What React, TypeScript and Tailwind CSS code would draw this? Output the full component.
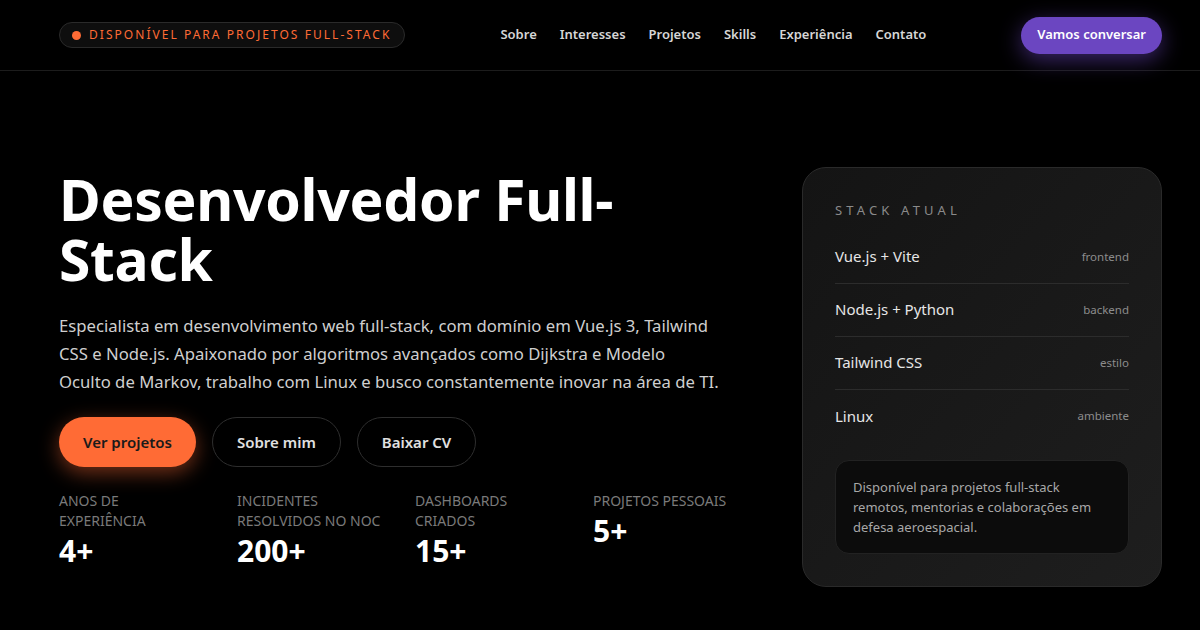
import React from "react";

const links = ["Sobre", "Interesses", "Projetos", "Skills", "Experiência", "Contato"];

const stack = [
  { name: "Vue.js + Vite", tag: "frontend" },
  { name: "Node.js + Python", tag: "backend" },
  { name: "Tailwind CSS", tag: "estilo" },
  { name: "Linux", tag: "ambiente" },
];

const stats = [
  { label: "Anos de experiência", value: "4+" },
  { label: "Incidentes resolvidos no NOC", value: "200+" },
  { label: "Dashboards criados", value: "15+" },
  { label: "Projetos pessoais", value: "5+" },
];

const App: React.FC = () => {
  return (
    <div
      className="min-h-[630px] bg-black text-white"
      style={{ fontFamily: '"Noto Sans", "Open Sans", sans-serif' }}
    >
      <header className="h-[71px] border-b border-[#1c1c1c]">
        <div className="flex h-full items-center pl-[59px] pr-[38px]">
          <div className="flex h-[26px] items-center gap-[8px] rounded-full border border-[#2a2a2a] bg-[#0e0e0e] pl-[12px] pr-[13px]">
            <span className="h-[9px] w-[9px] rounded-full bg-[#ff6b35]" />
            <span className="text-[12px] tracking-[0.17em] text-[#ff6b35]">
              DISPONÍVEL PARA PROJETOS FULL-STACK
            </span>
          </div>
          <nav className="ml-auto flex items-center gap-[23px] text-[13px] font-semibold text-[#d6d6d6]">
            {links.map((l) => (
              <a key={l} href="#" className="hover:text-white">
                {l}
              </a>
            ))}
          </nav>
          <button className="ml-[95px] h-[37px] rounded-full bg-[#6b46c1] px-[16px] text-[13px] font-semibold text-white shadow-[0_6px_22px_rgba(107,70,193,0.55)]">
            Vamos conversar
          </button>
        </div>
      </header>

      <main className="flex items-center justify-between pl-[59px] pr-[38px] pt-[96px]">
        <section className="w-[690px] pb-[14px]">
          <h1 className="w-[620px] text-[57px] font-bold leading-[60px] tracking-[-0.005em]">
            Desenvolvedor Full-Stack
          </h1>
          <p className="mt-[23px] text-[16.7px] leading-[28px] text-[#cfcfcf]">
            Especialista em desenvolvimento web full-stack, com domínio em Vue.js 3, Tailwind
            <br />
            CSS e Node.js. Apaixonado por algoritmos avançados como Dijkstra e Modelo
            <br />
            Oculto de Markov, trabalho com Linux e busco constantemente inovar na área de TI.
          </p>
          <div className="mt-[21px] flex gap-[16px]">
            <button className="h-[50px] rounded-full bg-[#ff6b35] px-[24px] text-[15px] font-semibold text-[#1a1a1a] shadow-[0_6px_20px_rgba(255,107,53,0.45)]">
              Ver projetos
            </button>
            <button className="h-[50px] rounded-full border border-[#2e2e2e] px-[24px] text-[15px] font-semibold text-[#e0e0e0]">
              Sobre mim
            </button>
            <button className="h-[50px] rounded-full border border-[#2e2e2e] px-[24px] text-[15px] font-semibold text-[#e0e0e0]">
              Baixar CV
            </button>
          </div>
          <div className="mt-[24px] grid w-[712px] grid-cols-4">
            {stats.map((s) => (
              <div key={s.label}>
                <div className="max-w-[147px] text-[14px] uppercase leading-[20px] text-[#7a7a7a]">
                  {s.label}
                </div>
                <div className="mt-[1px] text-[30px] font-bold leading-[38px]">{s.value}</div>
              </div>
            ))}
          </div>
        </section>

        <aside className="w-[360px] shrink-0 rounded-[24px] border border-[#2a2a2a] bg-gradient-to-br from-[#141414] to-[#1e1e1e] px-[32px] pb-[32px] pt-[33px]">
          <div className="text-[13px] tracking-[0.32em] text-[#8a8a8a]">STACK ATUAL</div>
          <ul className="mt-[10px]">
            {stack.map((s, i) => (
              <li
                key={s.name}
                className={`flex h-[53px] items-center justify-between ${
                  i < stack.length - 1 ? "border-b border-[#2c2c2c]" : ""
                }`}
              >
                <span className="text-[15px] text-[#e6e6e6]">{s.name}</span>
                <span className="text-[11.5px] text-[#8c8c8c]">{s.tag}</span>
              </li>
            ))}
          </ul>
          <div className="mt-[17px] rounded-[14px] border border-[#222] bg-[#0c0c0c] px-[17px] pb-[16px] pt-[16px] text-[13px] leading-[20px] text-[#a8a8a8]">
            Disponível para projetos full-stack remotos, mentorias e colaborações em defesa
            aeroespacial.
          </div>
        </aside>
      </main>
    </div>
  );
};

export default App;
